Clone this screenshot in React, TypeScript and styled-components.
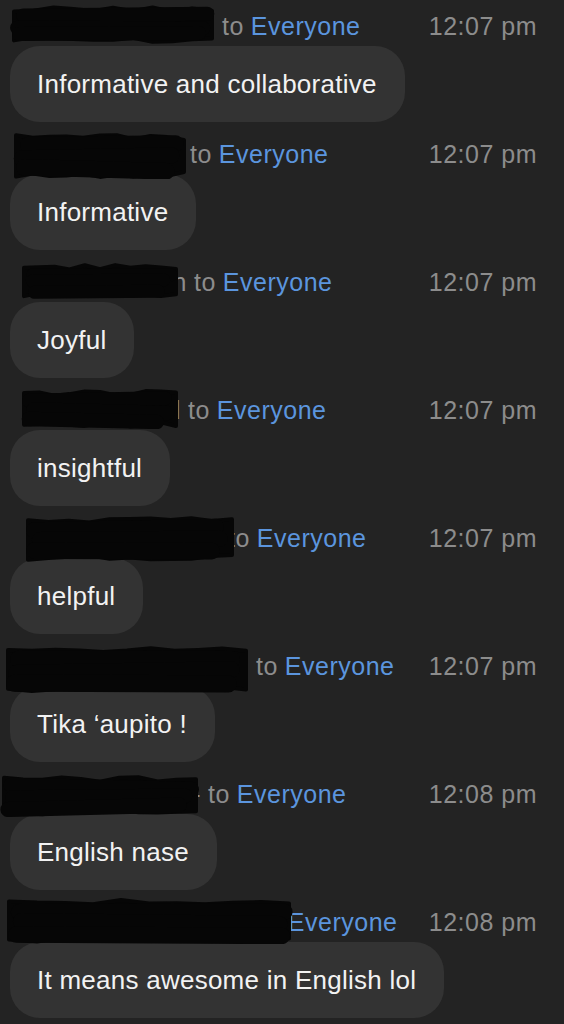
import React from "react";
import styled, { createGlobalStyle } from "styled-components";

const Global = createGlobalStyle`
  html, body { margin: 0; padding: 0; background: #232323; }
  body { font-family: "Liberation Sans", Arial, sans-serif; -webkit-font-smoothing: antialiased; }
`;

const Page = styled.div`
  width: 564px;
  height: 1024px;
  overflow: hidden;
  background: #232323;
  padding: 0 27px 0 10px;
  box-sizing: border-box;
  display: flex;
  flex-direction: column;
`;

const Message = styled.div`
  position: relative;
  height: 128px;
  padding-top: 6px;
  box-sizing: border-box;
  display: flex;
  flex-direction: column;
  align-items: flex-start;
`;

const Header = styled.div`
  align-self: stretch;
  height: 40px;
  display: flex;
  align-items: center;
  font-size: 25px;
  letter-spacing: 0.5px;
  white-space: nowrap;
`;

const Name = styled.span<{ $w: number }>`
  width: ${(p) => p.$w}px;
  flex: none;
  margin-right: 7px;
  color: #8c8c8c;
  text-align: right;
  overflow: hidden;
`;

const To = styled.span`
  color: #8c8c8c;
  margin-right: 7px;
`;

const Recipient = styled.span`
  color: #5b95de;
`;

const Time = styled.span`
  margin-left: auto;
  color: #8c8c8c;
`;

const Bubble = styled.div`
  height: 76px;
  display: inline-flex;
  align-items: center;
  padding: 0 28px 0 27px;
  border-radius: 30px;
  background: #333333;
  color: #f2f2f2;
  font-size: 26px;
  letter-spacing: 0.25px;
  white-space: nowrap;
`;

const MaskSvg = styled.svg`
  position: absolute;
  pointer-events: none;
`;

type Blob = { x: number; y: number; w: number; h: number; seed: number };

function Redaction({ x, y, w, h, seed }: Blob) {
  const s = (n: number) => ((Math.sin(seed * 12.9898 + n * 78.233) * 43758.5453) % 1 + 1) % 1;
  const steps = 10;
  const top: string[] = [];
  const bottom: string[] = [];
  for (let i = 0; i <= steps; i++) {
    const px = 4 + ((w - 8) * i) / steps;
    top.push(`${px.toFixed(1)},${(2 + s(i) * 5).toFixed(1)}`);
    bottom.push(`${px.toFixed(1)},${(h - 2 - s(i + 30) * 5).toFixed(1)}`);
  }
  const d = `M ${top.join(" L ")} L ${bottom.reverse().join(" L ")} Z`;
  const sw = h * 0.36;
  const strokes = [0.28, 0.55, 0.78].map((f, i) => ({
    x1: sw / 2 + s(i + 10) * 8,
    y1: h * f + (s(i + 3) - 0.5) * 4,
    x2: w - sw / 2 - s(i + 15) * 16,
    y2: h * f + (s(i + 5) - 0.5) * 6,
  }));
  return (
    <MaskSvg width={w} height={h} viewBox={`0 0 ${w} ${h}`} style={{ left: x, top: y }}>
      <path d={d} fill="#060606" strokeLinejoin="round" stroke="#060606" strokeWidth={4} />
      {strokes.map((l, i) => (
        <line
          key={i}
          x1={l.x1}
          y1={l.y1}
          x2={l.x2}
          y2={l.y2}
          stroke="#060606"
          strokeWidth={sw}
          strokeLinecap="round"
        />
      ))}
    </MaskSvg>
  );
}

type Msg = {
  name: number;
  frag?: string;
  showTo: boolean;
  time: string;
  text: string;
  blob: Blob;
};

const messages: Msg[] = [
  { name: 205, showTo: true, time: "12:07 pm", text: "Informative and collaborative", blob: { x: 0, y: 5, w: 206, h: 39, seed: 1 } },
  { name: 173, showTo: true, time: "12:07 pm", text: "Informative", blob: { x: 2, y: 5, w: 176, h: 46, seed: 2 } },
  { name: 177, frag: "n", showTo: true, time: "12:07 pm", text: "Joyful", blob: { x: 10, y: 7, w: 160, h: 36, seed: 3 } },
  { name: 171, frag: "d", showTo: true, time: "12:07 pm", text: "insightful", blob: { x: 10, y: 5, w: 160, h: 40, seed: 4 } },
  { name: 211, showTo: true, time: "12:07 pm", text: "helpful", blob: { x: 14, y: 4, w: 212, h: 46, seed: 5 } },
  { name: 239, showTo: true, time: "12:07 pm", text: "Tika \u2018aupito !", blob: { x: -6, y: 5, w: 246, h: 48, seed: 6 } },
  { name: 191, frag: "-", showTo: true, time: "12:08 pm", text: "English nase", blob: { x: -10, y: 7, w: 200, h: 42, seed: 7 } },
  { name: 242, showTo: true, time: "12:08 pm", text: "It means awesome in English lol", blob: { x: -5, y: 2, w: 288, h: 46, seed: 8 } },
];

export default function App() {
  return (
    <>
      <Global />
      <Page>
        {messages.map((m, i) => (
          <Message key={i}>
            <Header>
              <Name $w={m.name}>{m.frag ?? ""}</Name>
              {m.showTo && <To>to</To>}
              <Recipient>Everyone</Recipient>
              <Time>{m.time}</Time>
            </Header>
            <Bubble>{m.text}</Bubble>
            <Redaction {...m.blob} />
          </Message>
        ))}
      </Page>
    </>
  );
}
